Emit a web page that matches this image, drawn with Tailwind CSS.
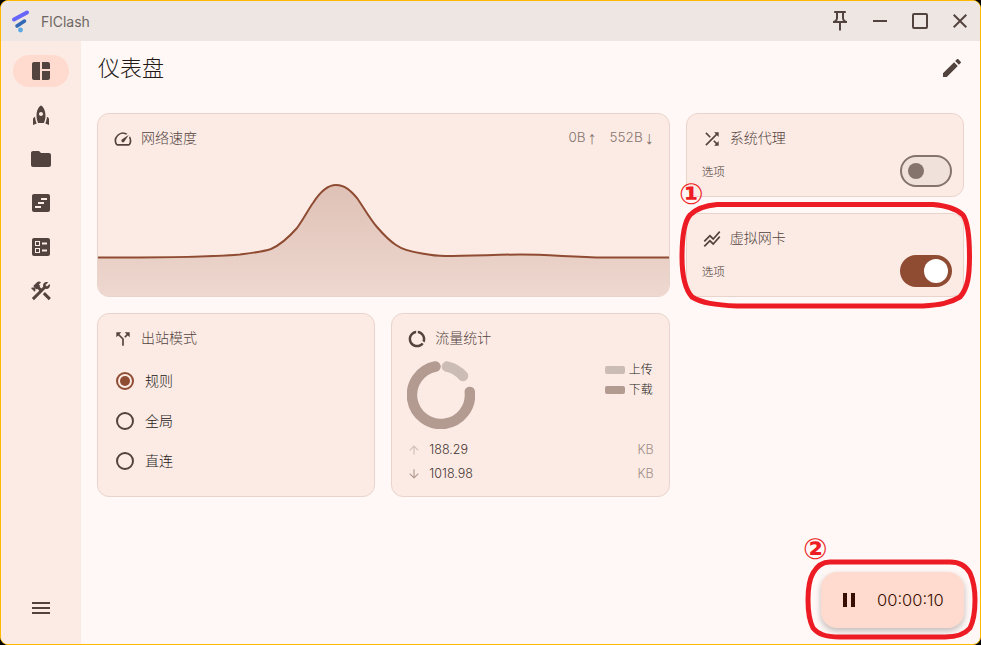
<!DOCTYPE html>
<html lang="en">
  <head>
    <meta charset="UTF-8" />
    <meta name="viewport" content="width=device-width, initial-scale=1.0" />
    <script src="https://cdn.jsdelivr.net/npm/@tailwindcss/browser@4"></script>
    <title>FlClash</title>
  </head>
  <body class="bg-black overflow-hidden">
    <div class="relative w-[981px] h-[645px] flex flex-col overflow-hidden rounded-lg border border-[#ffb900] bg-[#fff8f6] font-light font-['Inter','Noto_Sans_CJK_SC',sans-serif]">
      <!-- title bar -->
      <header class="h-10 shrink-0 flex items-center bg-[#ede6e2]">
        <svg class="ml-[9px] w-5 h-6" viewBox="10 9 20 24" fill="none" stroke-linecap="round">
          <path d="M14 19.5 27 12.5" stroke="#6666fb" stroke-width="4" />
          <path d="M17 26 24.5 21" stroke="#336ab6" stroke-width="3.5" />
          <circle cx="20.5" cy="30" r="2.4" fill="#5aa9e6" />
        </svg>
        <span class="ml-[11px] pt-px text-sm font-normal text-[#6f6764]">FlClash</span>
        <div class="ml-auto flex text-[#53433f]">
          <div class="w-10 h-10 flex items-center justify-center">
            <svg class="w-6 h-6" viewBox="0 0 24 24" fill="currentColor"><path d="M14 4v5c0 1.12.37 2.16 1 3H9c.65-.86 1-1.9 1-3V4h4m3-2H7c-.55 0-1 .45-1 1s.45 1 1 1h1v5c0 1.66-1.34 3-3 3v2h5.97v7l1 1 1-1v-7H19v-2c-1.66 0-3-1.34-3-3V4h1c.55 0 1-.45 1-1s-.45-1-1-1z" /></svg>
          </div>
          <div class="w-10 h-10 flex items-center justify-center">
            <svg class="w-6 h-6" viewBox="0 0 24 24" fill="currentColor"><path d="M5 11h14v2H5z" /></svg>
          </div>
          <div class="w-10 h-10 flex items-center justify-center">
            <svg class="w-6 h-6" viewBox="0 0 24 24" fill="none" stroke="currentColor" stroke-width="2"><rect x="5" y="5" width="14" height="14" rx="1" /></svg>
          </div>
          <div class="w-10 h-10 flex items-center justify-center">
            <svg class="w-6 h-6" viewBox="0 0 24 24" fill="currentColor"><path d="M19 6.41 17.59 5 12 10.59 6.41 5 5 6.41 10.59 12 5 17.59 6.41 19 12 13.41 17.59 19 19 17.59 13.41 12z" /></svg>
          </div>
        </div>
      </header>

      <div class="flex-1 flex min-h-0">
        <!-- side nav -->
        <nav class="w-20 shrink-0 flex flex-col items-center bg-[#fcebe4] pt-3.5 pb-6 text-[#53433f]">
          <div class="w-14 h-8 rounded-full bg-[#ffdbcf] flex items-center justify-center">
            <svg class="w-6 h-6" viewBox="0 0 24 24" fill="currentColor"><path d="M11 21H5c-1.1 0-2-.9-2-2V5c0-1.1.9-2 2-2h6v18zm2 0h6c1.1 0 2-.9 2-2v-7h-8v9zm8-11V5c0-1.1-.9-2-2-2h-6v7h8z" /></svg>
          </div>
          <div class="mt-1.5 flex flex-col">
            <div class="h-11 flex items-center justify-center"><svg class="w-6 h-6" viewBox="0 0 24 24" fill="currentColor"><path d="M12 2.5s4.5 2.04 4.5 10.5c0 2.49-1.04 5.57-1.6 7H9.1c-.56-1.43-1.6-4.51-1.6-7C7.5 4.54 12 2.5 12 2.5zm2 8.5c0-1.1-.9-2-2-2s-2 .9-2 2 .9 2 2 2 2-.9 2-2zm-6.31 9.52c-.48-1.23-1.52-4.17-1.67-6.87l-1.13.75c-.56.38-.89 1-.89 1.67V22l3.69-1.48zM20 22v-5.93c0-.67-.33-1.29-.89-1.66l-1.13-.75c-.15 2.69-1.2 5.64-1.67 6.87L20 22z" /></svg></div>
            <div class="h-11 flex items-center justify-center"><svg class="w-6 h-6" viewBox="0 0 24 24" fill="currentColor"><path d="M10 4H4c-1.1 0-1.99.9-1.99 2L2 18c0 1.1.9 2 2 2h16c1.1 0 2-.9 2-2V8c0-1.1-.9-2-2-2h-8l-2-2z" /></svg></div>
            <div class="h-11 flex items-center justify-center"><svg class="w-6 h-6" viewBox="0 0 24 24" fill="currentColor"><path d="M19 3H5C3.9 3 3 3.9 3 5v14c0 1.1.9 2 2 2h14c1.1 0 2-.9 2-2V5C21 3.9 20.1 3 19 3zM12 17H6v-2h6V17zM15 13H9v-2h6V13zM18 9h-6V7h6V9z" /></svg></div>
            <div class="h-11 flex items-center justify-center"><svg class="w-6 h-6" viewBox="0 0 24 24" fill="currentColor"><path d="M13 9.5h5v-2h-5v2zm0 7h5v-2h-5v2zm6 4.5H5c-1.1 0-2-.9-2-2V5c0-1.1.9-2 2-2h14c1.1 0 2 .9 2 2v14c0 1.1-.9 2-2 2zM6 11h5V6H6v5zm1-4h3v3H7V7zM6 18h5v-5H6v5zm1-4h3v3H7v-3z" /></svg></div>
            <div class="h-11 flex items-center justify-center"><svg class="w-6 h-6" viewBox="0 0 24 24" fill="currentColor"><path d="M13.783 15.172l2.121-2.121 5.996 5.996-2.121 2.121zM17.5 10c1.93 0 3.5-1.57 3.5-3.5 0-.58-.16-1.12-.41-1.6l-2.7 2.7-1.49-1.49 2.7-2.7c-.48-.25-1.02-.41-1.6-.41C15.57 3 14 4.57 14 6.5c0 .41.08.8.21 1.16l-1.85 1.85-1.78-1.78.71-.71-1.41-1.41L12 3.49c-1.17-1.17-3.07-1.17-4.24 0L4.22 7.03l1.41 1.41H2.81l-.71.71 3.54 3.54.71-.71V9.15l1.41 1.41.71-.71 1.78 1.78-7.41 7.41 2.12 2.12L16.34 9.79c.36.13.75.21 1.16.21z" /></svg></div>
          </div>
          <svg class="mt-auto w-6 h-6" viewBox="0 0 24 24" fill="currentColor"><path d="M3 18h18v-2H3v2zm0-5h18v-2H3v2zm0-7v2h18V6H3z" /></svg>
        </nav>

        <!-- dashboard -->
        <main class="flex-1 min-w-0 px-4">
          <div class="h-[54px] flex items-center justify-between">
            <h1 class="pl-px text-[22px] text-[#231917]">仪表盘</h1>
            <svg class="w-6 h-6 text-[#53433f]" viewBox="0 0 24 24" fill="currentColor"><path d="M3 17.25V21h3.75L17.81 9.94l-3.75-3.75L3 17.25zM20.71 7.04c.39-.39.39-1.02 0-1.41l-2.34-2.34c-.39-.39-1.02-.39-1.41 0l-1.83 1.83 3.75 3.75 1.83-1.83z" /></svg>
          </div>

          <div class="mt-[18px] grid grid-cols-3 grid-rows-[84px_84px_184px] gap-4">
            <!-- network speed -->
            <section class="col-span-2 row-span-2 flex flex-col overflow-hidden rounded-xl border border-[#e9d4cc] bg-[#fcebe4]">
              <div class="mt-[15px] mx-[15px] h-5 flex items-center gap-2 text-[#53433f]">
                <svg class="w-5 h-5" viewBox="0 0 24 24" fill="currentColor"><path d="M20.38 8.57l-1.23 1.85a8 8 0 0 1-.22 7.58H5.07A8 8 0 0 1 15.58 6.85l1.85-1.23A10 10 0 0 0 3.35 19a2 2 0 0 0 1.72 1h13.85a2 2 0 0 0 1.74-1 10 10 0 0 0-.27-10.44z" /><path d="M10.59 15.41a2 2 0 0 0 2.83 0l5.66-8.49-8.49 5.66a2 2 0 0 0 0 2.83z" /></svg>
                <span class="pb-0.5 text-sm">网络速度</span>
                <div class="ml-auto pb-[3px] flex gap-[13px] text-[13.5px] text-[#85736e]">
                  <span class="flex items-center gap-[2px]">0B<span class="font-['Liberation_Sans'] text-lg leading-none">↑</span></span>
                  <span class="flex items-center gap-[2px]">552B<span class="font-['Liberation_Sans'] text-lg leading-none">↓</span></span>
                </div>
              </div>
              <svg class="mt-auto block w-full h-[146px]" viewBox="98 150 570.67 146" preserveAspectRatio="none">
                <defs>
                  <linearGradient id="speedFill" x1="0" y1="0" x2="0" y2="1">
                    <stop offset="0" stop-color="#dfc1b6" />
                    <stop offset="1" stop-color="#eed8d0" />
                  </linearGradient>
                </defs>
                <path d="M97 257.5C150 257.5 200 258 240 254.5C252 253 262 252 271 249C280 245 290 236 297 228C303 220 308 210 313 203C320 192 328 185 336 185C345 185 351 191 357 198C364 208 370 219 377 227C383 234 390 241 396 245C403 250 412 252 422 253.5C430 255 438 256 445 256C470 256 500 254.5 520 254.5C550 254.5 570 257 605 257.5L669 257.5V297H97Z" fill="url(#speedFill)" />
                <path d="M97 257.5C150 257.5 200 258 240 254.5C252 253 262 252 271 249C280 245 290 236 297 228C303 220 308 210 313 203C320 192 328 185 336 185C345 185 351 191 357 198C364 208 370 219 377 227C383 234 390 241 396 245C403 250 412 252 422 253.5C430 255 438 256 445 256C470 256 500 254.5 520 254.5C550 254.5 570 257 605 257.5L669 257.5" fill="none" stroke="#8f4c33" stroke-width="2" />
              </svg>
            </section>

            <!-- system proxy -->
            <section class="flex flex-col rounded-xl border border-[#e9d4cc] bg-[#fcebe4] pt-[15px] pl-[15px] pr-[11px]">
              <div class="h-5 flex items-center gap-2 text-[#53433f]">
                <svg class="w-5 h-5" viewBox="0 0 24 24" fill="currentColor"><path d="M10.59 9.17L5.41 4 4 5.41l5.17 5.17 1.42-1.41zM14.5 4l2.04 2.04L4 18.59 5.41 20 17.96 7.46 20 9.5V4h-5.5zm.33 9.41l-1.41 1.41 3.13 3.13L14.5 20H20v-5.5l-2.04 2.04-3.13-3.13z" /></svg>
                <span class="pb-0.5 text-sm">系统代理</span>
              </div>
              <div class="mt-1.5 flex items-center justify-between">
                <span class="pt-1 text-[11.5px] text-[#3f3431]">选项</span>
                <div class="w-[52px] h-8 flex items-center rounded-full border-2 border-[#85736e] bg-[#f0e1da] pl-1.5">
                  <div class="w-4 h-4 rounded-full bg-[#85736e]"></div>
                </div>
              </div>
            </section>

            <!-- virtual nic -->
            <section class="col-start-3 flex flex-col rounded-xl border border-[#e9d4cc] bg-[#fcebe4] pt-[15px] pl-[15px] pr-[11px]">
              <div class="h-5 flex items-center gap-2 text-[#53433f]">
                <svg class="w-5 h-5" viewBox="0 0 24 24" fill="currentColor"><path d="M2 19.99l7.5-7.51 4 4 7.09-7.97L22 9.92l-8.5 9.56-4-4-6 6.01-1.5-1.5zm1.5-4.5l6-6.01 4 4L22 3.92l-1.41-1.41-7.09 7.97-4-4L2 13.99l1.5 1.5z" /></svg>
                <span class="pb-0.5 text-sm">虚拟网卡</span>
              </div>
              <div class="mt-1.5 flex items-center justify-between">
                <span class="pt-1 text-[11.5px] text-[#3f3431]">选项</span>
                <div class="w-[52px] h-8 flex items-center justify-end rounded-full bg-[#8f4c33] pr-1">
                  <div class="w-6 h-6 rounded-full bg-white"></div>
                </div>
              </div>
            </section>

            <!-- outbound mode -->
            <section class="rounded-xl border border-[#e9d4cc] bg-[#fcebe4] pt-[15px] px-[15px]">
              <div class="h-5 flex items-center gap-2 text-[#53433f]">
                <svg class="w-5 h-5" viewBox="0 0 24 24" fill="currentColor"><path d="M14 4l2.29 2.29-2.88 2.88 1.42 1.42 2.88-2.88L20 10V4zm-4 0H4v6l2.29-2.29 4.71 4.7V20h2v-8.41l-5.29-5.3z" /></svg>
                <span class="pb-0.5 text-sm">出站模式</span>
              </div>
              <div class="mt-3 pl-0.5 text-sm text-[#231917]">
                <div class="h-10 flex items-center gap-2.5">
                  <svg class="w-5 h-5" viewBox="0 0 20 20"><circle cx="10" cy="10" r="8" fill="none" stroke="#8f4c33" stroke-width="2" /><circle cx="10" cy="10" r="5" fill="#8f4c33" /></svg>
                  <span>规则</span>
                </div>
                <div class="h-10 flex items-center gap-2.5">
                  <svg class="w-5 h-5" viewBox="0 0 20 20"><circle cx="10" cy="10" r="8" fill="none" stroke="#53433f" stroke-width="2" /></svg>
                  <span>全局</span>
                </div>
                <div class="h-10 flex items-center gap-2.5">
                  <svg class="w-5 h-5" viewBox="0 0 20 20"><circle cx="10" cy="10" r="8" fill="none" stroke="#53433f" stroke-width="2" /></svg>
                  <span>直连</span>
                </div>
              </div>
            </section>

            <!-- traffic stats -->
            <section class="rounded-xl border border-[#e9d4cc] bg-[#fcebe4] pt-[15px] px-[15px]">
              <div class="h-5 flex items-center gap-2 text-[#53433f]">
                <svg class="w-5 h-5" viewBox="0 0 24 24" fill="currentColor"><path d="M13 2.05v3.03c3.39.49 6 3.39 6 6.92 0 .9-.18 1.75-.48 2.54l2.6 1.53c.56-1.24.88-2.62.88-4.07 0-5.18-3.95-9.45-9-9.95zM12 19c-3.87 0-7-3.13-7-7 0-3.53 2.61-6.43 6-6.92V2.05c-5.06.5-9 4.76-9 9.95 0 5.52 4.47 10 9.99 10 3.31 0 6.24-1.61 8.06-4.09l-2.6-1.53C16.17 17.98 14.21 19 12 19z" /></svg>
                <span class="pb-0.5 text-sm">流量统计</span>
              </div>
              <div class="mt-3 flex justify-between">
                <svg class="w-[68px] h-[68px]" viewBox="407 361 68 68" fill="none" stroke-width="10.5" stroke-linecap="round">
                  <path d="M447 366.6A29 29 0 0 1 463 376" stroke="#cbbcb5" />
                  <path d="M469.8 391.9A29 29 0 1 1 435.5 366.5" stroke="#b39b92" />
                </svg>
                <div class="-mt-px pr-px text-xs text-[#231917]">
                  <div class="h-5 flex items-center gap-1"><div class="w-5 h-2 rounded-[2px] bg-[#cbbcb5]"></div><span>上传</span></div>
                  <div class="h-5 flex items-center gap-1"><div class="w-5 h-2 rounded-[2px] bg-[#b39b92]"></div><span>下载</span></div>
                </div>
              </div>
              <div class="mt-[9px] text-[12.5px] text-[#3f3431]">
                <div class="h-6 flex items-center">
                  <svg class="w-3.5 h-3.5 text-[#d1bfb8]" viewBox="0 0 24 24" fill="currentColor"><path d="M4 12l1.41 1.41L11 7.83V20h2V7.83l5.58 5.59L20 12l-8-8-8 8z" /></svg>
                  <span class="ml-2">188.29</span>
                  <span class="ml-auto text-[#a08f89]">KB</span>
                </div>
                <div class="h-6 flex items-center">
                  <svg class="w-3.5 h-3.5 text-[#b39b92]" viewBox="0 0 24 24" fill="currentColor"><path d="M20 12l-1.41-1.41L13 16.17V4h-2v12.17l-5.58-5.59L4 12l8 8 8-8z" /></svg>
                  <span class="ml-2">1018.98</span>
                  <span class="ml-auto text-[#a08f89]">KB</span>
                </div>
              </div>
            </section>
          </div>
        </main>
      </div>

      <!-- timer button -->
      <div class="absolute left-[820px] top-[571px] w-[143px] h-14 flex items-center rounded-2xl bg-[#ffdbcf] pl-4 text-[#390c00] shadow-[0_3px_6px_rgba(0,0,0,0.25)]">
        <svg class="w-6 h-6" viewBox="0 0 24 24" fill="currentColor"><path d="M6 19h4V5H6v14zm8-14v14h4V5h-4z" /></svg>
        <span class="ml-4 text-[16.5px]">00:00:10</span>
      </div>

      <!-- red annotations -->
      <svg class="absolute left-[-1px] top-[-1px] w-[981px] h-[645px] pointer-events-none" viewBox="0 0 981 645" fill="none" stroke="#ed1c24" stroke-width="5">
        <path d="M717 204.5L933 204.5C950 206 958 210 963 215C968 222 969.5 240 969.5 257C969.5 275 968 288 960 297C950 303 940 305 923 306L737 306C715 305 702 303 692 297C684 288 682 272 682 257C682 238 684 222 690 215C696 209 705 205.5 717 204.5Z" />
        <path d="M830 562L950 562C960 562 966 566 970 573C974 582 975 590 975 600C975 612 974 620 970 628C965 634 958 637 945 637L840 637C825 637 818 634 813 628C809 620 808 610 808 600C808 590 809 580 813 573C817 566 822 562 830 562Z" />
      </svg>
      <span class="absolute left-[678px] top-[179px] text-[29px] leading-7 font-bold text-[#ed1c24] font-['DejaVu_Sans']">①</span>
      <span class="absolute left-[802px] top-[534px] text-[29px] leading-7 font-bold text-[#ed1c24] font-['DejaVu_Sans']">②</span>
    </div>
  </body>
</html>
